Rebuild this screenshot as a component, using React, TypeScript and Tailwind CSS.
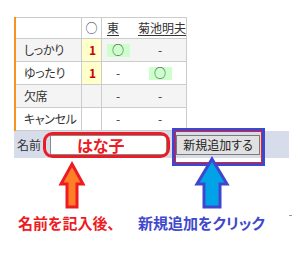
const rows = [
  { label: 'しっかり', count: '1', east: 'o', kiku: '-', bg: 'bg-[#f4f4f4]' },
  { label: 'ゆったり', count: '1', east: '-', kiku: 'o', bg: 'bg-white' },
  { label: '欠席', count: '', east: '-', kiku: '-', bg: 'bg-[#f4f4f4]' },
  { label: 'キャンセル', count: '', east: '-', kiku: '-', bg: 'bg-white' },
]

function Mark({ value }: { value: string }) {
  if (value === 'o') {
    return <span className="flex h-[13px] w-[23px] items-center justify-center bg-[#ccffcc] leading-none">○</span>
  }
  return <span>-</span>
}

export default function App() {
  return (
    <div
      className="relative h-[271px] w-[293px] overflow-hidden bg-white pl-[14px] pt-[17px] text-[12px] text-[#333] [font-feature-settings:'palt']"
      style={{ fontFamily: '"Noto Sans CJK JP", "Noto Sans", sans-serif' }}
    >
      {/* Attendance table */}
      <div className="w-[173px] border-l-2 border-[#f7931e]">
        <div className="flex h-[22px] border-y border-r border-[#cccccc] bg-white">
          <div className="w-[66px] border-r border-[#cccccc]" />
          <div className="flex w-[20px] items-center justify-center border-r border-[#cccccc]">○</div>
          <div className="flex w-[32px] items-center pl-[5px] underline underline-offset-2">東</div>
          <div className="flex flex-1 items-center pl-[4px] underline underline-offset-2">菊池明夫</div>
        </div>
        {rows.map(r => (
          <div key={r.label} className={`flex h-[23px] border-b border-r border-[#cccccc] ${r.bg}`}>
            <div className="flex w-[66px] items-center border-r border-[#cccccc] pl-[8px] tracking-[-0.4px]">{r.label}</div>
            <div
              className={`flex w-[20px] items-center justify-end border-r border-[#cccccc] pr-[5px] font-bold text-[#cc0000] ${r.count ? 'bg-[#ffffcc]' : ''}`}
            >
              {r.count}
            </div>
            <div className="flex w-[32px] items-center justify-center">
              <Mark value={r.east} />
            </div>
            <div className="flex flex-1 items-center justify-center">
              <Mark value={r.kiku} />
            </div>
          </div>
        ))}
      </div>

      {/* Name entry bar */}
      <div className="flex h-[27px] w-[275px] items-center bg-[#d7dcea] pl-[3px]">
        <span className="w-[33px]">名前</span>
        <input
          readOnly
          value="はな子"
          className="h-[20px] w-[117px] border border-[#8a8a8a] bg-white pl-[26px] text-[16px] font-bold leading-none text-[#ed1c24] outline-none"
        />
        <button className="ml-[9px] h-[20px] w-[84px] border border-[#7a7a7a] bg-[#e1e1e1] text-[12px] leading-none text-[#222]">
          新規追加する
        </button>
      </div>

      {/* Captions */}
      <div className="mt-[57px] flex gap-[15px] pl-[4px] text-[15px] font-bold leading-[15px]">
        <span className="w-[105px] text-[#ed1c24]">名前を記入後、</span>
        <span className="text-[#3f48cc]">新規追加をクリック</span>
      </div>

      {/* Annotation overlay */}
      <svg className="pointer-events-none absolute left-0 top-0" width="293" height="271" viewBox="0 0 293 271">
        <rect x="44.5" y="133.5" width="124" height="23" rx="8" fill="none" stroke="#ed1c24" strokeWidth="3" />
        <rect x="173.5" y="129.5" width="90" height="35" fill="none" stroke="#3f48cc" strokeWidth="3" />
        <rect x="175.5" y="131.5" width="86" height="31" fill="none" stroke="#ed1c24" strokeWidth="1" />
        <polygon
          points="72,164 83,184 77,184 77,207 67,207 67,184 61,184"
          fill="#ff7f27"
          stroke="#ed1c24"
          strokeWidth="3"
          strokeLinejoin="miter"
        />
        <polygon
          points="212,159 227,184 220,184 220,207 204,207 204,184 197,184"
          fill="#00a2e8"
          stroke="#3f48cc"
          strokeWidth="3"
        />
        <line x1="289" y1="215.5" x2="292" y2="215.5" stroke="#999" strokeWidth="1" />
      </svg>
    </div>
  )
}
